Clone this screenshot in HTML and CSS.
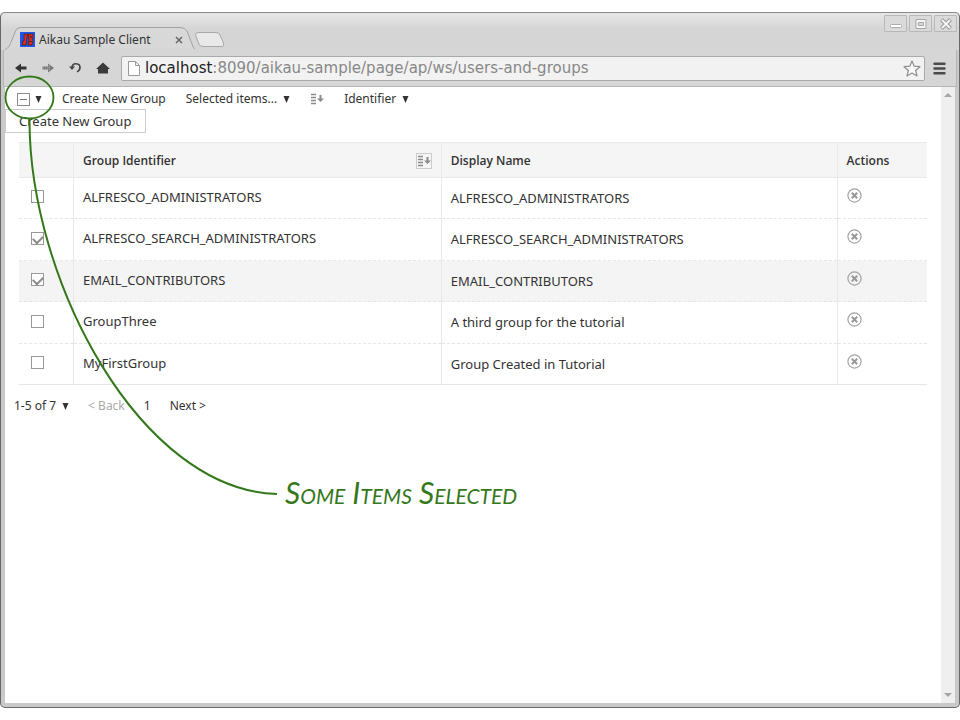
FILE: index.html
```html
<!DOCTYPE html>
<html lang="en">
<head>
<meta charset="utf-8">
<title>Aikau Sample Client</title>
<link rel="stylesheet" href="styles.css">
</head>
<body>
<svg class="defs" width="0" height="0" aria-hidden="true">
  <symbol id="sort" viewBox="0 0 14 12">
    <path d="M1 1.500h5M1 4.500h5M1 7.500h5M1 10.500h5" stroke="#8c8c8c" stroke-width="1.600" fill="none"/>
    <path d="M9.500 2h2v3.500h2.500l-3.500 3.500-3.500-3.500h2.500z" fill="#8c8c8c"/>
  </symbol>
  <symbol id="remove" viewBox="0 0 15 15">
    <circle cx="7.500" cy="7.500" r="6.600" fill="none" stroke="#a3a3a3" stroke-width="1.200"/>
    <path d="M4.800 4.800l5.400 5.400M10.200 4.800l-5.400 5.400" stroke="#989898" stroke-width="2" fill="none"/>
  </symbol>
  <symbol id="caret" viewBox="0 0 7 7"><path d="M.5 0h6l-3 7z" fill="#333"/></symbol>
</svg>
<div class="window">
  <header class="titlebar">
    <div class="tab">
      <svg class="tab-shape" width="190" height="24" viewBox="0 0 190 24" aria-hidden="true">
        <path d="M0 23.500C4 22 5 19 7 13.500L11 4Q12.500 1.500 16 1.500H175Q180 1.500 182 5L187 18Q188 21.500 190 23.500" fill="#d8d8d8" stroke="#a2a2a2"/>
      </svg>
      <svg class="favicon" width="15" height="15" viewBox="0 0 15 15" aria-hidden="true">
        <path d="M0 0h15v15H0z" fill="#2356e8"/>
        <path d="M4 2h3.500L6 13H2l1-4h1z" fill="#e8291a" stroke="#321" stroke-width=".7"/>
        <path d="M8.500 2h4.500v4l-1 1 1 2-1 4H8l1-5z" fill="#e8291a" stroke="#321" stroke-width=".7"/>
        <path d="M10 5h2M9.500 9.500h2" stroke="#321"/>
      </svg>
      <span class="tab-title">Aikau Sample Client</span>
      <button class="tab-close" aria-label="Close tab"><svg width="8" height="8" viewBox="0 0 8 8"><path d="M1 1l6 6M7 1L1 7" stroke="#666" stroke-width="1.500"/></svg></button>
    </div>
    <button class="new-tab" aria-label="New tab"><svg width="30" height="15" viewBox="0 0 30 15"><path d="M3 .5H21Q24 .5 25 3L28.500 11Q29.500 14.500 27 14.500H8Q5 14.500 4 12L.8 4Q0 .5 3 .5z" fill="#e9e9e9" stroke="#a8a8a8"/></svg></button>
    <div class="controls">
      <button aria-label="Minimize"><svg width="12" height="12" viewBox="0 0 12 12"><rect x=".5" y="6.500" width="11" height="3" rx="1" fill="#fff" stroke="#aaa"/></svg></button>
      <button aria-label="Maximize"><svg width="12" height="12" viewBox="0 0 12 12"><path d="M1 1.500h10v9H1zM3.500 4.500v3h5v-3z" fill="#f5f5f5" fill-rule="evenodd" stroke="#a6a6a6"/></svg></button>
      <button aria-label="Close"><svg width="12" height="12" viewBox="0 0 12 12"><path d="M1.500 1.500l9 9M10.500 1.500l-9 9" stroke="#999" stroke-width="4"/><path d="M2 2l8 8M10 2l-8 8" stroke="#f5f5f5" stroke-width="2"/></svg></button>
    </div>
  </header>
  <nav class="toolbar">
    <div class="nav-buttons">
      <button aria-label="Back"><svg width="12" height="10" viewBox="0 0 12 10"><path d="M0 5l6-4.500v3h5.500v3H6v3z" fill="#333"/></svg></button>
      <button aria-label="Forward"><svg width="12" height="10" viewBox="0 0 12 10"><path d="M12 5L6 .5v3H.5v3H6v3z" fill="#777"/><path d="M1 4h8M1 6h8M7 2v6" stroke="#aaa" stroke-dasharray="1 1"/></svg></button>
      <button aria-label="Reload"><svg width="12" height="12" viewBox="0 0 12 12"><path d="M3 5.500C3.500 0 11 1 11 5.500c0 2-1 3.300-3 4.200" fill="none" stroke="#444" stroke-width="1.700"/><path d="M0 4.500h6L3 8z" fill="#444"/></svg></button>
      <button aria-label="Home"><svg width="14" height="12" viewBox="0 0 14 12"><path d="M0 7l7-6.500L14 7h-2v4.500H2V7z" fill="#3a3a3a"/></svg></button>
    </div>
    <div class="address">
      <svg width="12" height="15" viewBox="0 0 12 15" aria-hidden="true"><path d="M.5 .5h7l4 4v10H.5zM7.500 .5v4h4" fill="#fff" stroke="#999"/></svg>
      <span class="url"><b>localhost</b>:8090/aikau-sample/page/ap/ws/users-and-groups</span>
      <button aria-label="Bookmark"><svg width="18" height="17" viewBox="0 0 18 17"><path d="M9 1l2.200 5.200 5.800.5-4.400 3.800 1.400 5.500L9 13l-5 3 1.400-5.500L1 6.700l5.800-.5z" fill="#fafafa" stroke="#8e8e8e" stroke-width="1.200" stroke-linejoin="round"/></svg></button>
    </div>
    <button aria-label="Menu"><svg width="13" height="13" viewBox="0 0 13 13"><path d="M1.500 1.800h10M1.500 6.500h10M1.500 11.200h10" stroke="#4a4a4a" stroke-width="2.400" stroke-linecap="round"/></svg></button>
  </nav>
  <div class="viewport">
    <main class="page">
      <div class="menubar">
        <button class="selector" aria-label="Select items"><span class="some"></span><svg width="7" height="7"><use href="#caret"/></svg></button>
        <button>Create New Group</button>
        <button>Selected items...<svg width="7" height="7"><use href="#caret"/></svg></button>
        <button aria-label="Sort order"><svg class="sort" width="14" height="12"><use href="#sort"/></svg></button>
        <button>Identifier<svg width="7" height="7"><use href="#caret"/></svg></button>
      </div>
      <button class="create">Create New Group</button>
      <table class="groups">
        <thead>
          <tr>
            <th class="col-select"></th>
            <th class="col-id"><div class="head">Group Identifier<span class="sort-box"><svg width="14" height="12" aria-hidden="true"><use href="#sort"/></svg></span></div></th>
            <th class="col-name">Display Name</th>
            <th>Actions</th>
          </tr>
        </thead>
        <tbody>
          <tr><td><input type="checkbox" aria-label="Select ALFRESCO_ADMINISTRATORS"></td><td>ALFRESCO_ADMINISTRATORS</td><td class="name">ALFRESCO_ADMINISTRATORS</td><td class="action"><button aria-label="Delete"><svg width="15" height="15"><use href="#remove"/></svg></button></td></tr>
          <tr><td><input type="checkbox" checked aria-label="Select ALFRESCO_SEARCH_ADMINISTRATORS"></td><td>ALFRESCO_SEARCH_ADMINISTRATORS</td><td class="name">ALFRESCO_SEARCH_ADMINISTRATORS</td><td class="action"><button aria-label="Delete"><svg width="15" height="15"><use href="#remove"/></svg></button></td></tr>
          <tr class="focused"><td><input type="checkbox" checked aria-label="Select EMAIL_CONTRIBUTORS"></td><td>EMAIL_CONTRIBUTORS</td><td class="name">EMAIL_CONTRIBUTORS</td><td class="action"><button aria-label="Delete"><svg width="15" height="15"><use href="#remove"/></svg></button></td></tr>
          <tr><td><input type="checkbox" aria-label="Select GroupThree"></td><td>GroupThree</td><td class="name">A third group for the tutorial</td><td class="action"><button aria-label="Delete"><svg width="15" height="15"><use href="#remove"/></svg></button></td></tr>
          <tr><td><input type="checkbox" aria-label="Select MyFirstGroup"></td><td>MyFirstGroup</td><td class="name">Group Created in Tutorial</td><td class="action"><button aria-label="Delete"><svg width="15" height="15"><use href="#remove"/></svg></button></td></tr>
        </tbody>
      </table>
      <div class="pager">
        <button>1-5 of 7<svg width="7" height="7"><use href="#caret"/></svg></button>
        <button disabled>&lt; Back</button>
        <span>1</span>
        <button>Next &gt;</button>
      </div>
    </main>
    <div class="scrollbar" aria-hidden="true"><i class="up"></i><i class="down"></i></div>
  </div>
</div>
<svg class="callout" width="290" height="510" viewBox="0 0 290 510" aria-hidden="true">
  <g fill="none" stroke="#34781b">
    <ellipse cx="29.500" cy="97.500" rx="24" ry="21" stroke-width="1.800"/>
    <path d="M29.500 119C29 280 140 490 277 494" stroke-width="2"/>
  </g>
</svg>
<p class="note">Some Items Selected</p>
</body>
</html>
```
FILE: styles.css
```css
* { box-sizing: border-box; }

body {
  position: relative;
  display: flex;
  min-height: 100vh;
  margin: 0;
  padding: 12px 0;
  background: #fff;
  color: #333;
  font: 13px/18px "Noto Sans", sans-serif;
}

button {
  display: inline-flex;
  align-items: center;
  margin: 0;
  padding: 0;
  border: 0;
  background: none;
  color: inherit;
  font: inherit;
  white-space: nowrap;
}

.defs { position: absolute; }

.window {
  display: flex;
  flex: 1;
  flex-direction: column;
  border: 1px solid #686868;
  border-top-color: #8a8a8a;
  border-radius: 5px;
  background: #c9c9c9;
  padding: 0 4px 4px;
}

.titlebar {
  display: flex;
  align-items: flex-end;
  height: 37px;
  margin: 0 -4px;
  padding-left: 4px;
  border-radius: 5px 5px 0 0;
  background: linear-gradient(#e6e6e6, #d5d5d5 16px);
}

.tab {
  position: relative;
  display: flex;
  align-items: center;
  width: 190px;
  height: 24px;
  padding: 3px 12px 0 15px;
  font-size: 12px;
}

.tab-shape { position: absolute; left: 0; top: 0; }
.favicon, .tab-title, .tab-close { position: relative; }
.tab-title { flex: 1; margin-left: 4px; }

.new-tab { margin: 0 0 3px; }

.controls {
  display: flex;
  align-self: flex-start;
  gap: 2px;
  margin: 2px 2px 0 auto;
}

.controls button {
  justify-content: center;
  width: 23px;
  height: 17px;
  border: 1px solid #b8b8b8;
  border-radius: 1px;
  background: #dadada;
}

.toolbar {
  display: flex;
  align-items: center;
  height: 37px;
  margin: 0 -2px;
  padding: 0 10px 0 11px;
  border: 1px solid #b5b5b5;
  border-top: 0;
  background: #d6d6d6;
}

.nav-buttons { display: flex; gap: 15px; margin-right: 11px; }

.address {
  display: flex;
  flex: 1;
  align-items: center;
  height: 25px;
  margin-right: 8px;
  padding: 0 3px 0 6px;
  border: 1px solid #aaa;
  border-radius: 2px;
  background: #f2f2f2;
}

.url {
  flex: 1;
  margin-left: 5px;
  color: #888;
  font: 15px/20px "DejaVu Sans", sans-serif;
}

.url b { color: #222; font-weight: normal; }

.viewport { display: flex; flex: 1; background: #fff; }
.page { flex: 1; }

.menubar {
  display: flex;
  align-items: center;
  gap: 20px;
  height: 22px;
  padding: 2px 0 0 12px;
  font-size: 12px;
}

.menubar svg, .pager svg { margin-left: 6px; }
.menubar .selector svg { margin-left: 5px; }
.menubar .sort { margin: 0; }

.some {
  width: 13px;
  height: 13px;
  border: 1px solid #8c8c8c;
  background: linear-gradient(#777, #777) center / 7px 1px no-repeat;
}

.create {
  height: 24px;
  padding: 0 14px 0 13px;
  border: 1px solid #ccc;
}

.groups {
  width: calc(100% - 28px);
  margin: 9px 14px 0;
  border-collapse: collapse;
  table-layout: fixed;
}

.groups th {
  height: 35px;
  padding: 2px 9px 0;
  border: solid #e9e9e9;
  border-width: 1px 0;
  background: #f5f5f5;
  font-family: "Open Sans", sans-serif;
  font-size: 12px;
  font-weight: 600;
  text-align: left;
}

.groups th + th, .groups td + td { border-left: 1px solid #e9e9e9; }

.col-select { width: 6%; }
.col-id { width: 40.500%; }
.col-name { width: 43.600%; }

.head { display: flex; align-items: center; justify-content: space-between; }

.sort-box {
  display: flex;
  align-items: center;
  justify-content: center;
  width: 16px;
  height: 16px;
  border: 1px solid #ccc;
}

.groups td {
  height: 41px;
  padding: 0 9px 3px;
  border-bottom: 1px dashed #e6e6e6;
}

.groups tr:nth-child(even) td { height: 42px; }
.groups tr:last-child td { border-bottom-style: solid; }
.groups .name { padding-bottom: 1px; }
.groups .action { padding-bottom: 6px; }
.groups .action button { display: flex; }
.focused { background: #f4f4f4; }

input[type="checkbox"] {
  display: block;
  appearance: none;
  width: 13px;
  height: 13px;
  margin: 0 0 0 3px;
  border: 1px solid #999;
  background: #fff;
}

input[type="checkbox"]:checked::after {
  content: "";
  display: block;
  width: 8px;
  height: 5px;
  margin: 2px 0 0 1px;
  border: solid #8c8c8c;
  border-width: 0 0 2px 2px;
  transform: rotate(-45deg);
}

.pager {
  display: flex;
  align-items: center;
  gap: 19px;
  margin: 12px 9px;
  font-size: 12px;
}

.pager button:disabled { color: #aaa; }

.scrollbar {
  display: flex;
  flex-direction: column;
  align-items: center;
  justify-content: space-between;
  width: 14px;
  padding: 6px 0;
  background: #efefef;
}

.up, .down { border: solid transparent; border-width: 0 4px; }
.up { border-bottom: 4px solid #a5a5a5; }
.down { border-top: 4px solid #a5a5a5; }

.callout { position: absolute; left: 0; top: 0; pointer-events: none; }

.note {
  position: absolute;
  left: 285px;
  top: 476px;
  margin: 0;
  color: #34781b;
  font: italic small-caps 30px/32px "Lato", cursive;
  white-space: nowrap;
}
```
